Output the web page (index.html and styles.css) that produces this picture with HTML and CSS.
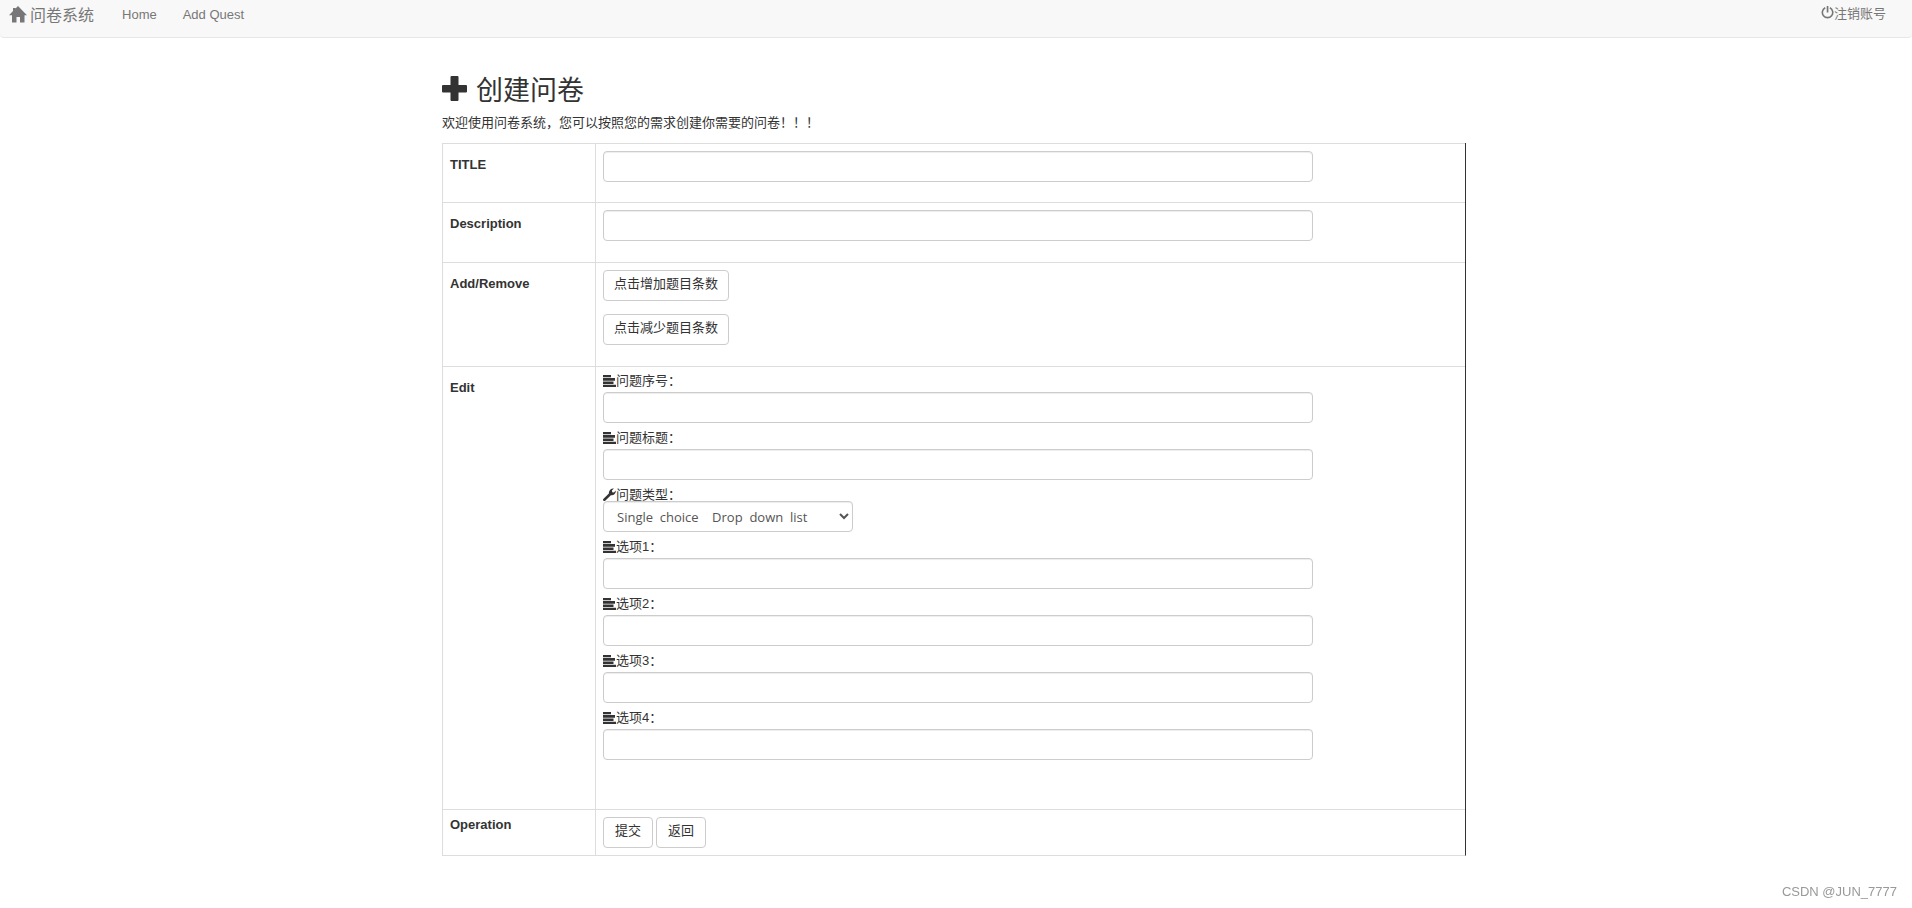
FILE: index.html
```html
<!DOCTYPE html>
<html lang="zh-CN">
<head>
<meta charset="utf-8">
<title>问卷系统</title>
<link rel="stylesheet" href="styles.css">
</head>
<body>
<svg class="defs" aria-hidden="true">
  <symbol id="i-home" viewBox="0 0 18 17"><path d="M9 0 18 9.200H15.500V16.500H11V11H7.500V16.500H3V9.200H0L4 5V2H6.500V2.500Z"/></symbol>
  <symbol id="i-off" viewBox="0 0 13 13"><path d="M5.700 0h1.700v6.500H5.700z"/><path d="M4.200 1.800A5.200 5.200 0 1 0 8.900 1.800" fill="none" stroke="currentColor" stroke-width="1.600"/></symbol>
  <symbol id="i-plus" viewBox="0 0 25 25"><path d="M9.500 0h6a1 1 0 0 1 1 1v8h7.500a1 1 0 0 1 1 1v5.500a1 1 0 0 1-1 1h-7.500V24a1 1 0 0 1-1 1h-6a1 1 0 0 1-1-1v-7.500H1a1 1 0 0 1-1-1V10a1 1 0 0 1 1-1h7.500V1a1 1 0 0 1 1-1z"/></symbol>
  <symbol id="i-list" viewBox="0 0 13 12"><path d="M0 0h8v2.200H0zM0 3h12v2.800H0zM0 6.500h10.500v2.500H0zM0 9.700h13v2.300H0z"/></symbol>
  <symbol id="i-wrench" viewBox="0 0 13 13"><path d="M.3 10.900 5.900 5.400C5.500 2.600 8 .2 10.900.5L8.900 2.500 9.300 4.200 10.900 4.500 12.800 2.600C13 5.500 10.700 7.700 7.900 7.200L2.200 12.700C1 13.600-.6 12.200.3 10.900Z"/></symbol>
</svg>
<nav class="navbar">
  <a class="brand" href="#"><svg class="icon-home"><use href="#i-home"/></svg>问卷系统</a>
  <a class="nav-link" href="#">Home</a>
  <a class="nav-link" href="#">Add Quest</a>
  <a class="logout" href="#"><svg class="icon-off"><use href="#i-off"/></svg>注销账号</a>
</nav>
<main class="container">
  <h1 class="heading"><svg class="icon-plus"><use href="#i-plus"/></svg>创建问卷</h1>
  <p class="intro">欢迎使用问卷系统，您可以按照您的需求创建你需要的问卷！！！</p>
  <form>
  <table class="form-table">
    <tr class="title-row"><th scope="row"><label class="row-label" for="title">TITLE</label></th>
      <td><input class="control" id="title" type="text"></td></tr>
    <tr><th scope="row"><label class="row-label" for="desc">Description</label></th>
      <td><input class="control" id="desc" type="text"></td></tr>
    <tr><th scope="row"><span class="row-label">Add/Remove</span></th>
      <td><div class="stack"><button class="btn" type="button">点击增加题目条数</button><button class="btn" type="button">点击减少题目条数</button></div></td></tr>
    <tr class="edit-row"><th scope="row"><span class="row-label">Edit</span></th>
      <td>
        <div class="field"><label for="no"><svg class="icon-list"><use href="#i-list"/></svg>问题序号：</label><input class="control" id="no" type="text"></div>
        <div class="field"><label for="name"><svg class="icon-list"><use href="#i-list"/></svg>问题标题：</label><input class="control" id="name" type="text"></div>
        <div class="field"><label for="kind"><svg class="icon-wrench"><use href="#i-wrench"/></svg>问题类型：</label><select class="control select" id="kind"><option>Single&nbsp; choice &nbsp; &nbsp;Drop&nbsp; down&nbsp; list</option></select></div>
        <div class="field"><label for="o1"><svg class="icon-list"><use href="#i-list"/></svg>选项1：</label><input class="control" id="o1" type="text"></div>
        <div class="field"><label for="o2"><svg class="icon-list"><use href="#i-list"/></svg>选项2：</label><input class="control" id="o2" type="text"></div>
        <div class="field"><label for="o3"><svg class="icon-list"><use href="#i-list"/></svg>选项3：</label><input class="control" id="o3" type="text"></div>
        <div class="field"><label for="o4"><svg class="icon-list"><use href="#i-list"/></svg>选项4：</label><input class="control" id="o4" type="text"></div>
      </td></tr>
    <tr class="action-row"><th scope="row">Operation</th>
      <td><div class="actions"><button class="btn" type="submit">提交</button><button class="btn" type="button">返回</button></div></td></tr>
  </table>
  </form>
</main>
<div class="watermark">CSDN @JUN_7777</div>
</body>
</html>
```
FILE: styles.css
```css
* { box-sizing: border-box; }
body {
  margin: 0;
  background: #fff;
  color: #333;
  font: 13px/18px "Liberation Sans", "Noto Sans CJK SC", sans-serif;
}
svg { fill: currentColor; flex: none; }
.defs { display: none; }
.navbar {
  display: flex;
  align-items: flex-start;
  height: 38px;
  padding: 0 26px 0 9px;
  background: #f8f8f8;
  border-bottom: 1px solid #e7e7e7;
  border-radius: 0 0 4px 4px;
  color: #777;
}
.navbar a { color: inherit; text-decoration: none; }
.brand {
  display: flex;
  gap: 3px;
  margin-right: 28px;
  padding-top: 6px;
  font-size: 16px;
  line-height: 20px;
}
.icon-home { width: 18px; height: 17px; }
.nav-link { margin-right: 26px; padding-top: 6px; }
.logout { display: flex; margin-left: auto; padding-top: 5px; }
.icon-off { width: 13px; height: 13px; margin-top: 1px; }
.container {
  max-width: 1028px;
  margin: 0 auto;
  padding-right: 4px;
}
.heading {
  display: flex;
  align-items: flex-start;
  gap: 9px;
  margin: 38px 0 0;
  font-size: 27px;
  line-height: 30px;
  font-weight: 400;
}
.icon-plus { width: 25px; height: 25px; }
.intro { margin: 8px 0 11px; }
.form-table {
  width: 100%;
  border-collapse: separate;
  border-spacing: 0;
  border: solid #ddd;
  border-width: 0 0 1px 1px;
  border-right: 1px solid #333;
}
.form-table th, .form-table td {
  padding: 7px 7px 21px;
  border-top: 1px solid #ddd;
  text-align: left;
  vertical-align: top;
}
.form-table th { width: 152px; font-weight: 700; }
.form-table td { border-left: 1px solid #ddd; }
.form-table .title-row td { padding-bottom: 20px; }
.form-table .edit-row td { padding-bottom: 49px; }
.form-table .action-row th, .form-table .action-row td { padding-bottom: 7px; }
.form-table .action-row th { padding-top: 6px; }
.row-label { display: block; padding-top: 5px; }
.control {
  display: block;
  width: 83%;
  height: 31px;
  padding: 5px 11px;
  border: 1px solid #ccc;
  border-radius: 4px;
  background: #fff;
  color: #555;
  font: inherit;
  box-shadow: inset 0 1px 1px rgba(0, 0, 0, .075);
}
.select {
  position: relative;
  width: 250px;
  margin-top: -5px;
  padding: 5px 8px 5px 9px;
  font-family: "Open Sans", sans-serif;
}
.stack { display: flex; flex-direction: column; align-items: flex-start; gap: 13px; }
.btn {
  height: 31px;
  padding: 0 10px 4px;
  border: 1px solid #ccc;
  border-radius: 4px;
  background: #fff;
  color: #333;
  font: inherit;
}
.field + .field { margin-top: 8px; }
.field label { display: flex; padding-bottom: 4px; line-height: 14px; }
.icon-list { width: 13px; height: 12px; margin-top: 1px; }
.icon-wrench { width: 13px; height: 13px; }
.actions { display: flex; gap: 3px; }
.actions .btn { padding: 0 11px 4px; }
.watermark {
  position: fixed;
  right: 15px;
  bottom: 7px;
  color: #999;
  font-size: 13px;
}
```
